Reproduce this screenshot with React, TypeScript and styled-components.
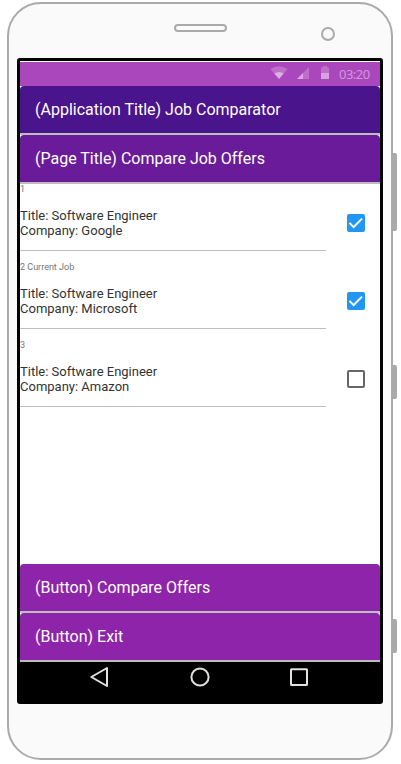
import React, { useState } from "react";
import styled, { createGlobalStyle } from "styled-components";

const GlobalStyle = createGlobalStyle`
  * { box-sizing: border-box; }
  body {
    margin: 0;
    background: #fff;
    font-family: Roboto, "Liberation Sans", sans-serif;
  }
`;

const Stage = styled.main`
  width: 401px;
  height: 764px;
  padding: 2px 0 0 7px;
  overflow: hidden;
`;

const Phone = styled.div`
  position: relative;
  display: flex;
  flex-direction: column;
  align-items: center;
  width: 386px;
  height: 758px;
  border: 2px solid #aaa;
  border-radius: 34px;
  background: #fafafa;
`;

const SideButton = styled.span<{ $top: number; $height: number }>`
  position: absolute;
  right: -6px;
  top: ${(p) => p.$top}px;
  width: 6px;
  height: ${(p) => p.$height}px;
  border-radius: 0 2px 2px 0;
  background: #aaa;
`;

const Forehead = styled.div`
  display: grid;
  grid-template-columns: 165px 53px 94px 14px;
  align-items: start;
  width: 100%;
  height: 54px;
  padding-top: 20px;
`;

const Speaker = styled.span`
  grid-column: 2;
  height: 8px;
  border: 2px solid #aaa;
  border-radius: 4px;
`;

const Camera = styled.span`
  grid-column: 4;
  height: 14px;
  margin-top: 3px;
  border: 2px solid #aaa;
  border-radius: 50%;
`;

const Screen = styled.div`
  display: flex;
  flex-direction: column;
  width: 366px;
  height: 646px;
  border: 3px solid #000;
  border-radius: 3px;
  background: #fff;
`;

const StatusBar = styled.div`
  display: flex;
  justify-content: flex-end;
  height: 24px;
  margin-top: 1px;
  background: #ab47bc;
`;

const StatusIcons = styled.svg`
  width: 62px;
  height: 24px;
  fill: #fff;
`;

const Clock = styled.time`
  width: 48px;
  padding-left: 7px;
  color: rgba(255, 255, 255, 0.45);
  font: 13px/25px "Noto Sans", sans-serif;
  letter-spacing: -0.5px;
`;

const Bar = styled.div<{ $color: string }>`
  flex: none;
  display: flex;
  height: 49px;
  border-bottom: 2px solid #bdbdbd;
  background: #fff;

  > * {
    flex: 1;
    height: 47px;
    margin: 0;
    padding: 0 15px;
    border: 0;
    border-radius: 4px 4px 0 0;
    background: ${(p) => p.$color};
    color: #fff;
    font: 400 16px/47px Roboto, sans-serif;
    text-align: left;
  }
`;

const OfferList = styled.ul`
  flex: 1;
  display: flex;
  flex-direction: column;
  gap: 11px;
  margin: 0;
  padding: 0;
  list-style: none;
`;

const Offer = styled.li`
  display: grid;
  grid-template-columns: 306px 18px;
  column-gap: 21px;
  height: 67px;
`;

const OfferText = styled.div`
  border-bottom: 1px solid #bdbdbd;
  color: #333;
  font-size: 13px;
  line-height: 15px;
`;

const OfferLabel = styled.div`
  height: 24px;
  color: #757575;
  font-size: 9px;
  line-height: 11px;
`;

const Check = styled.button<{ $on: boolean }>`
  width: 18px;
  height: 18px;
  margin-top: 30px;
  padding: 0;
  border: ${(p) => (p.$on ? "0" : "2px solid #666")};
  border-radius: 2px;
  background: ${(p) => (p.$on ? "#2196f3" : "#fff")};

  svg {
    display: block;
    fill: #fff;
  }
`;

const NavBar = styled.nav`
  display: flex;
  justify-content: center;
  height: 39px;
  background: #000;
  fill: none;
  stroke: #e0e0e0;
  stroke-width: 2;
`;

const offers = [
  { label: "1", company: "Google", selected: true },
  { label: "2 Current Job", company: "Microsoft", selected: true },
  { label: "3", company: "Amazon", selected: false },
];

export default function App() {
  const [selected, setSelected] = useState(offers.map((o) => o.selected));
  const toggle = (index: number) =>
    setSelected((all) => all.map((on, i) => (i === index ? !on : on)));

  return (
    <Stage>
      <GlobalStyle />
      <Phone>
        <SideButton $top={149} $height={78} />
        <SideButton $top={361} $height={34} />
        <SideButton $top={615} $height={34} />
        <Forehead>
          <Speaker />
          <Camera />
        </Forehead>
        <Screen>
          <StatusBar>
            <StatusIcons viewBox="0 0 62 24">
              <path d="M0.3 7.1Q9 1.2 17.7 7.1L9 17Z" opacity=".22" />
              <path d="M4.3 11.6Q9 8.3 13.7 11.6L9 17Z" opacity=".45" />
              <path d="M39 5V17H27Z" opacity=".22" />
              <path d="M33 11V17H27Z" opacity=".4" />
              <path d="M51 6Q51 5.3 52 5.3H53V4H57V5.3H58Q59 5.3 59 6V11H51Z" opacity=".22" />
              <path d="M51 11H59V17H51Z" opacity=".5" />
            </StatusIcons>
            <Clock>03:20</Clock>
          </StatusBar>
          <Bar $color="#4a148c"><h1>(Application Title) Job Comparator</h1></Bar>
          <Bar $color="#6a1b9a"><h2>(Page Title) Compare Job Offers</h2></Bar>
          <OfferList>
            {offers.map((offer, i) => (
              <Offer key={offer.label}>
                <OfferText>
                  <OfferLabel>{offer.label}</OfferLabel>
                  <div>Title: Software Engineer</div>
                  <div>Company: {offer.company}</div>
                </OfferText>
                <Check
                  $on={selected[i]}
                  role="checkbox"
                  aria-checked={selected[i]}
                  aria-label={offer.company}
                  onClick={() => toggle(i)}
                >
                  {selected[i] && (
                    <svg width="18" height="18" viewBox="0 0 18 18">
                      <path d="M6.6 14.6L1.8 9.6L3.2 8.2L6.6 11.7L14.3 3.9L15.7 5.3Z" />
                    </svg>
                  )}
                </Check>
              </Offer>
            ))}
          </OfferList>
          <Bar $color="#8e24aa"><button>(Button) Compare Offers</button></Bar>
          <Bar $color="#8e24aa"><button>(Button) Exit</button></Bar>
          <NavBar>
            <svg width="360" height="39" viewBox="0 0 360 39">
              <path d="M71.3 15L87 6V24Z" strokeLinejoin="round" />
              <circle cx="180" cy="15" r="8.6" />
              <rect x="271" y="7.3" width="16" height="15.7" rx=".5" />
            </svg>
          </NavBar>
        </Screen>
      </Phone>
    </Stage>
  );
}
